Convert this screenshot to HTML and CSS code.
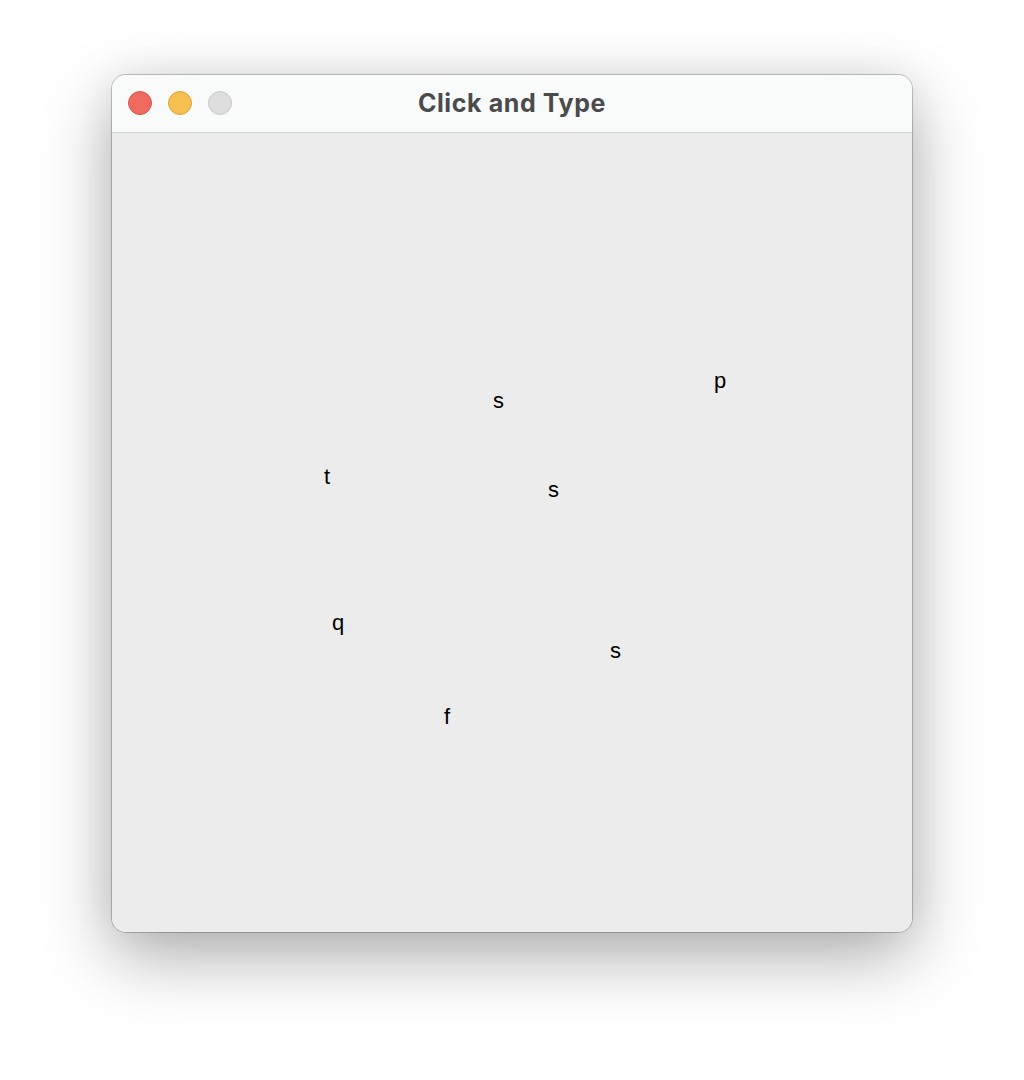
FILE: index.html
```html
<!DOCTYPE html>
<html>
<head>
<meta charset="utf-8">
<title>Click and Type</title>
<link rel="stylesheet" href="styles.css">
</head>
<body>
<div class="window">
  <div class="titlebar">
    <div class="lights">
      <span class="light close"></span>
      <span class="light min"></span>
      <span class="light zoom"></span>
    </div>
    <div class="title">Click and Type</div>
  </div>
  <div class="canvas">
    <span class="ch" style="left:381px;top:257px">s</span>
    <span class="ch" style="left:602px;top:237px">p</span>
    <span class="ch" style="left:212px;top:333px">t</span>
    <span class="ch" style="left:436px;top:346px">s</span>
    <span class="ch" style="left:220px;top:479px">q</span>
    <span class="ch" style="left:498px;top:507px">s</span>
    <span class="ch" style="left:332px;top:573px">f</span>
  </div>
</div>
</body>
</html>
```
FILE: styles.css
```css
html, body {
  margin: 0;
  padding: 0;
  background: #ffffff;
}
body {
  width: 1024px;
  height: 1080px;
  overflow: hidden;
  padding-top: 75px;
  padding-left: 112px;
  box-sizing: border-box;
}
.window {
  width: 800px;
  border-radius: 14px;
  overflow: hidden;
  background: #ececec;
  box-shadow: 0 0 0 1px rgba(0,0,0,0.22), 0 24px 70px rgba(0,0,0,0.32), 0 0 40px rgba(0,0,0,0.06);
}
.titlebar {
  position: relative;
  height: 57px;
  background: #f9fafa;
  border-bottom: 1px solid #d3d3d3;
  display: flex;
  align-items: center;
  justify-content: center;
}
.lights {
  position: absolute;
  left: 16px;
  top: 16px;
  display: flex;
  gap: 16px;
}
.light {
  width: 24px;
  height: 24px;
  border-radius: 50%;
  box-sizing: border-box;
}
.close { background: #ee6a5f; border: 1px solid #d4574d; }
.min { background: #f5c04f; border: 1px solid #d9a43d; }
.zoom { background: #dedede; border: 1px solid #c8c8c8; }
.title {
  font-family: Inter, "Liberation Sans", sans-serif;
  font-weight: 700;
  font-size: 25px;
  color: #4b4b4b;
  letter-spacing: 0.6px;
  margin-top: -2px;
}
.canvas {
  position: relative;
  height: 799px;
  background: #ececec;
}
.ch {
  position: absolute;
  font-family: "Liberation Sans", Arial, sans-serif;
  font-size: 22px;
  line-height: 1;
  color: #000;
}
```
